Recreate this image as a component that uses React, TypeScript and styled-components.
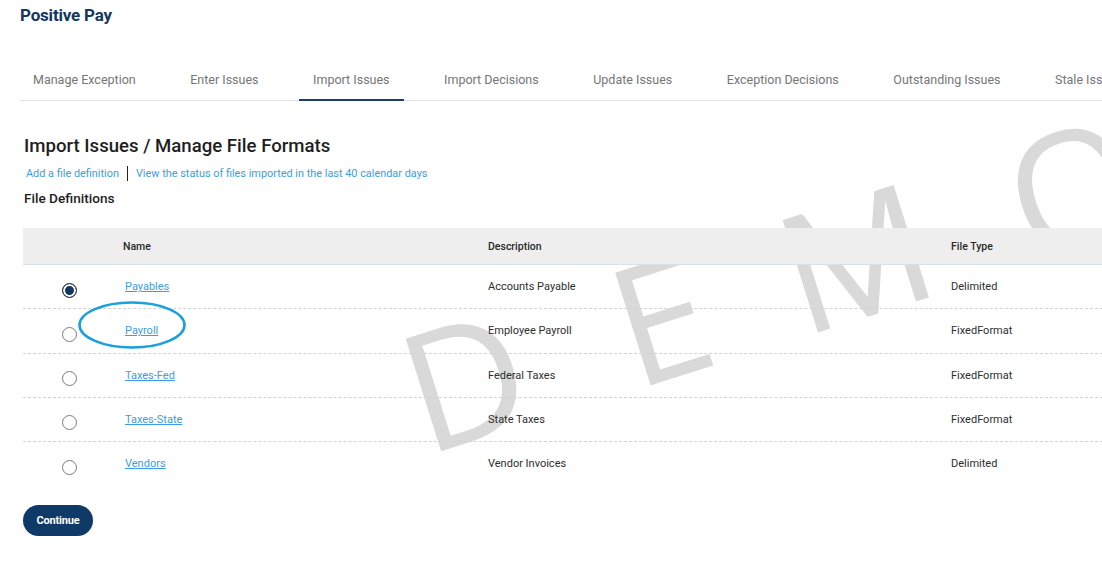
import styled, { createGlobalStyle } from "styled-components";

const GlobalStyle = createGlobalStyle`
  html, body {
    margin: 0;
    padding: 0;
    background: #ffffff;
    overflow: hidden;
  }
  body {
    font-family: Roboto, "Liberation Sans", Arial, sans-serif;
    color: #222;
  }
`;

const Page = styled.div`
  position: relative;
  width: 1102px;
  min-height: 586px;
`;

// big rotated DEMO stamp behind the table
const Watermark = styled.div`
  position: absolute;
  left: 426px;
  top: 310px;
  font-family: "Open Sans", sans-serif;
  font-size: 165px;
  line-height: 1;
  color: #d9d9d9;
  white-space: nowrap;
  transform-origin: 0 147px;
  transform: rotate(-17.5deg);
  z-index: 0;
  user-select: none;
`;

const Letter = styled.span<{ $space: number }>`
  margin-right: ${(p) => p.$space}px;
`;

const Content = styled.div`
  position: relative;
  z-index: 1;
  padding: 4px 0 0 20px;
`;

const Title = styled.h1`
  margin: 0;
  font-family: Roboto, sans-serif;
  font-size: 17px;
  line-height: 22px;
  font-weight: 700;
  color: #14375e;
  letter-spacing: -0.2px;
`;

const TabBar = styled.nav`
  display: flex;
  gap: 26.5px;
  margin-top: 34px;
  width: 1200px;
  border-bottom: 1px solid #e3e3e3;
`;

const Tab = styled.div<{ $active?: boolean }>`
  padding: 0 14px;
  height: 39px;
  display: flex;
  align-items: center;
  font-size: 12.5px;
  color: #767676;
  white-space: nowrap;
  border-bottom: 2px solid ${(p) => (p.$active ? "#1d3d66" : "transparent")};
  margin-bottom: -1px;
  &:first-child {
    margin-left: -1px;
  }
`;

const Section = styled.section`
  padding-left: 4px;
  margin-top: 33px;
`;

const Heading = styled.h2`
  margin: 0;
  font-size: 18.6px;
  line-height: 24px;
  font-weight: 500;
  color: #1e1e1e;
`;

const LinkRow = styled.div`
  display: flex;
  align-items: center;
  margin-top: 7px;
  padding-left: 2px;
  height: 16px;
`;

const TopLink = styled.a`
  font-size: 10.9px;
  color: #3d9de2;
  text-decoration: none;
`;

const Bar = styled.span`
  width: 1px;
  height: 15px;
  background: #222;
  margin: 0 8px;
`;

const SubHeading = styled.h3`
  margin: 8px 0 0;
  font-size: 13.6px;
  line-height: 18px;
  font-weight: 500;
  color: #1e1e1e;
`;

const Table = styled.div`
  margin-top: 21px;
  margin-left: -1px;
  width: 1100px;
`;

const cols = "90px 365px 463px 1fr";

const HeadRow = styled.div`
  display: grid;
  grid-template-columns: ${cols};
  height: 36px;
  align-items: center;
  background: #eeeeee;
  border-bottom: 1px solid #d9e0e8;
`;

const HeadCell = styled.div`
  padding-left: 10px;
  font-size: 10.5px;
  font-weight: 500;
  color: #2a2a2a;
`;

const Row = styled.div<{ $last?: boolean }>`
  display: grid;
  grid-template-columns: ${cols};
  height: 43.25px;
  align-items: center;
  border-bottom: 1px dashed ${(p) => (p.$last ? "transparent" : "#d2d2d2")};
`;

const Cell = styled.div`
  position: relative;
  padding-left: 10px;
  font-size: 11px;
  color: #2e2e2e;
`;

const RadioCell = styled.div`
  display: flex;
  padding-left: 39px;
  padding-top: 7px;
`;

const Radio = styled.span<{ $checked?: boolean }>`
  width: 15px;
  height: 15px;
  border-radius: 50%;
  box-sizing: border-box;
  border: 1px solid ${(p) => (p.$checked ? "#333" : "#7a7a7a")};
  background: ${(p) => (p.$checked ? "#0e3563" : "#fff")};
  box-shadow: ${(p) => (p.$checked ? "inset 0 0 0 2px #fff" : "none")};
`;

const NameLink = styled.a`
  font-size: 11px;
  color: #3d9de2;
  text-decoration: underline;
  margin-left: 2px;
`;

// hand-drawn highlight ring around "Payroll"
const Circle = styled.svg`
  position: absolute;
  left: -36px;
  top: -24px;
  overflow: visible;
`;

const Continue = styled.button`
  margin-top: 19px;
  margin-left: -1px;
  width: 70px;
  height: 31px;
  border: none;
  border-radius: 16px;
  background: #0f3a67;
  color: #fff;
  font-family: Roboto, sans-serif;
  font-size: 11px;
  font-weight: 700;
  letter-spacing: -0.2px;
`;

const tabs = [
  "Manage Exception",
  "Enter Issues",
  "Import Issues",
  "Import Decisions",
  "Update Issues",
  "Exception Decisions",
  "Outstanding Issues",
  "Stale Issues",
];

const files = [
  { name: "Payables", desc: "Accounts Payable", type: "Delimited" },
  { name: "Payroll", desc: "Employee Payroll", type: "FixedFormat" },
  { name: "Taxes-Fed", desc: "Federal Taxes", type: "FixedFormat" },
  { name: "Taxes-State", desc: "State Taxes", type: "FixedFormat" },
  { name: "Vendors", desc: "Vendor Invoices", type: "Delimited" },
];

const stamp = [
  { ch: "D", space: 100 },
  { ch: "E", space: 84 },
  { ch: "M", space: 90 },
  { ch: "O", space: 0 },
];

export default function App() {
  return (
    <Page>
      <GlobalStyle />
      <Watermark>
        {stamp.map((s) => (
          <Letter key={s.ch} $space={s.space}>
            {s.ch}
          </Letter>
        ))}
      </Watermark>
      <Content>
        <Title>Positive Pay</Title>
        <TabBar>
          {tabs.map((t) => (
            <Tab key={t} $active={t === "Import Issues"}>
              {t}
            </Tab>
          ))}
        </TabBar>
        <Section>
          <Heading>Import Issues / Manage File Formats</Heading>
          <LinkRow>
            <TopLink href="#">Add a file definition</TopLink>
            <Bar />
            <TopLink href="#">View the status of files imported in the last 40 calendar days</TopLink>
          </LinkRow>
          <SubHeading>File Definitions</SubHeading>
          <Table>
            <HeadRow>
              <div />
              <HeadCell>Name</HeadCell>
              <HeadCell>Description</HeadCell>
              <HeadCell>File Type</HeadCell>
            </HeadRow>
            {files.map((f, i) => (
              <Row key={f.name} $last={i === files.length - 1}>
                <RadioCell>
                  <Radio $checked={i === 0} />
                </RadioCell>
                <Cell>
                  <NameLink href="#">{f.name}</NameLink>
                  {f.name === "Payroll" && (
                    <Circle width="110" height="50" viewBox="0 0 110 50">
                      <ellipse cx="55" cy="25" rx="52.5" ry="22.5" fill="none" stroke="#1aa0db" strokeWidth="2.6" />
                    </Circle>
                  )}
                </Cell>
                <Cell>{f.desc}</Cell>
                <Cell>{f.type}</Cell>
              </Row>
            ))}
          </Table>
          <Continue>Continue</Continue>
        </Section>
      </Content>
    </Page>
  );
}
